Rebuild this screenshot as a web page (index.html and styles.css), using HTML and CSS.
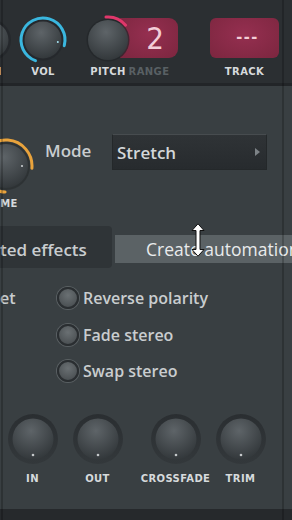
FILE: index.html
```html
<!doctype html>
<html lang="en">
    <head>
        <meta charset="UTF-8" />
        <meta name="viewport" content="width=device-width, initial-scale=1" />

        <link rel="stylesheet" href="styles.css">

        <title>Channel settings</title>
    </head>
    <body>
        <!-- shared gradients for the knobs -->
        <svg class="defs" aria-hidden="true">
            <defs>
                <radialGradient id="knob-fill" cx="0.45" cy="0.3" r="0.8">
                    <stop offset="0" stop-color="#5e6468" />
                    <stop offset="1" stop-color="#2d3235" />
                </radialGradient>
                <linearGradient id="knob-halo" x1="0" y1="0" x2="0" y2="1">
                    <stop offset="0" stop-color="#2a2e31" />
                    <stop offset="1" stop-color="#33383b" />
                </linearGradient>
            </defs>
        </svg>

        <div id="panel">
            <!-- Top strip: knobs and the red readouts -->
            <div class="top-bar">
                <div class="ctl ctl-cut">
                    <svg class="knob" width="48" height="48" viewBox="0 0 48 48">
                        <circle cx="24" cy="24" r="21" fill="#222528" opacity="0.6" />
                        <circle cx="24" cy="24" r="18.5" fill="url(#knob-fill)" />
                    </svg>
                    <span class="ctl-label">PAN</span>
                </div>
                <div class="ctl ctl-vol">
                    <svg class="knob" width="48" height="48" viewBox="0 0 48 48">
                        <circle cx="24" cy="24" r="20.5" fill="#222528" opacity="0.6" />
                        <circle cx="24" cy="24" r="18.5" fill="url(#knob-fill)" />
                        <path d="M16.48 44.68 A22 22 0 1 1 45.25 29.69" fill="none" stroke="#3ab7df" stroke-width="3" stroke-linecap="round" />
                        <circle cx="38.8" cy="26.1" r="1" fill="#a6e6f6" />
                    </svg>
                    <span class="ctl-label">VOL</span>
                </div>
                <div class="ctl ctl-pitch">
                    <svg class="knob" width="48" height="48" viewBox="0 0 48 48">
                        <circle cx="24" cy="24" r="21.5" fill="#222528" opacity="0.7" />
                        <circle cx="24" cy="24" r="20" fill="url(#knob-fill)" />
                        <path d="M22 1.09 A23 23 0 0 1 41.62 9.22" fill="none" stroke="#e0376b" stroke-width="3" stroke-linecap="round" />
                    </svg>
                    <span class="ctl-label">PITCH</span>
                </div>
                <div class="ctl ctl-range">
                    <div class="readout readout-range">2</div>
                    <span class="ctl-label dim">RANGE</span>
                </div>
                <div class="ctl ctl-track">
                    <div class="readout readout-track">---</div>
                    <span class="ctl-label">TRACK</span>
                </div>
            </div>

            <!-- Stretch mode -->
            <div class="mode-row">
                <div class="ctl ctl-volume">
                    <svg class="knob" width="60" height="60" viewBox="0 0 60 60">
                        <circle cx="30" cy="30" r="24" fill="#26292c" opacity="0.6" />
                        <circle cx="30" cy="30" r="22" fill="url(#knob-fill)" />
                        <path d="M29.09 55.98 A26 26 0 1 1 55.9 32.27" fill="none" stroke="#e9a33c" stroke-width="3" stroke-linecap="round" />
                        <circle cx="46" cy="30" r="1.1" fill="#c9cdcf" />
                    </svg>
                    <span class="ctl-label ctl-label-me">ME</span>
                </div>
                <span class="mode-label">Mode</span>
                <div class="dropdown">
                    <span>Stretch</span>
                    <span class="dropdown-arrow"></span>
                </div>
            </div>

            <!-- Effects header, with the hover hint over it -->
            <div class="effects">
                <div class="effects-tab">ted effects</div>
                <div class="hint">Create automation</div>
                <svg class="cursor" width="14" height="34" viewBox="0 0 14 34">
                    <path d="M7 0.8 L13 7.5 L9 7.5 L9 26.5 L13 26.5 L7 33.2 L1 26.5 L5 26.5 L5 7.5 L1 7.5 Z" fill="#fff" stroke="#111" stroke-width="1" />
                </svg>
            </div>

            <div class="options">
                <div class="options-side">et</div>
                <div class="radio-list">
                    <div class="radio"><span class="radio-dot"></span>Reverse polarity</div>
                    <div class="radio"><span class="radio-dot"></span>Fade stereo</div>
                    <div class="radio"><span class="radio-dot"></span>Swap stereo</div>
                </div>
            </div>

            <div class="knob-row">
                <div class="bk">
                    <svg class="knob" width="52" height="52" viewBox="0 0 52 52">
                        <circle cx="26" cy="26" r="25" fill="url(#knob-halo)" />
                        <circle cx="26" cy="26" r="20.5" fill="url(#knob-fill)" />
                        <circle cx="26" cy="42" r="1.3" fill="#c4c8ca" />
                    </svg>
                    <span class="ctl-label">IN</span>
                </div>
                <div class="bk">
                    <svg class="knob" width="52" height="52" viewBox="0 0 52 52">
                        <circle cx="26" cy="26" r="25" fill="url(#knob-halo)" />
                        <circle cx="26" cy="26" r="20.5" fill="url(#knob-fill)" />
                        <circle cx="26" cy="42" r="1.3" fill="#c4c8ca" />
                    </svg>
                    <span class="ctl-label">OUT</span>
                </div>
                <div class="bk bk-gap">
                    <svg class="knob" width="52" height="52" viewBox="0 0 52 52">
                        <circle cx="26" cy="26" r="25" fill="url(#knob-halo)" />
                        <circle cx="26" cy="26" r="20.5" fill="url(#knob-fill)" />
                        <circle cx="26" cy="42" r="1.3" fill="#c4c8ca" />
                    </svg>
                    <span class="ctl-label">CROSSFADE</span>
                </div>
                <div class="bk">
                    <svg class="knob" width="52" height="52" viewBox="0 0 52 52">
                        <circle cx="26" cy="26" r="25" fill="url(#knob-halo)" />
                        <circle cx="26" cy="26" r="20.5" fill="url(#knob-fill)" />
                        <circle cx="26" cy="42" r="1.3" fill="#c4c8ca" />
                    </svg>
                    <span class="ctl-label">TRIM</span>
                </div>
            </div>

            <div class="footer"></div>
        </div>
    </body>
</html>
```

FILE: styles.css
```css
body,
html {
    padding: 0;
    margin: 0;
}
body {
    width: 292px;
    height: 520px;
    overflow: hidden;
    background-color: #393f42;
    font-family: "Open Sans", "DejaVu Sans", sans-serif;
    color: #c9cdcf;
}
.defs {
    position: absolute;
    width: 0;
    height: 0;
}
#panel {
    position: relative;
    height: 520px;
    display: flex;
    flex-direction: column;
    overflow: hidden;
}
/* thin dark frame lines at the edges */
#panel::before,
#panel::after {
    content: "";
    position: absolute;
    top: 0;
    bottom: 0;
    width: 2px;
    background: rgba(0, 0, 0, 0.2);
    z-index: 3;
}
#panel::before {
    left: 1px;
}
#panel::after {
    right: 8px;
}

/* -- TOP BAR -- */

.top-bar {
    display: flex;
    align-items: flex-start;
    flex-shrink: 0;
    height: 67px;
    padding-top: 16px;
    background-color: #2b2f32;
    border-bottom: 3px solid #222528;
}
.ctl {
    display: flex;
    flex-direction: column;
    align-items: center;
    flex-shrink: 0;
    width: 48px;
}
.knob {
    display: block;
    overflow: visible;
}
.ctl-label {
    margin-top: 2px;
    font: bold 10px/12px "DejaVu Sans", sans-serif;
    letter-spacing: 0.4px;
    color: #d6dadc;
    white-space: nowrap;
}
.ctl-label.dim {
    color: #596064;
}
.ctl-cut {
    margin-left: -34px;
}
.ctl-vol {
    margin-left: 5px;
}
.ctl-pitch {
    position: relative;
    z-index: 1;
    margin-left: 17px;
}
.ctl-range {
    width: 58px;
    margin-left: -12px;
}
.ctl-track {
    width: 69px;
    margin-left: 32px;
}
.readout {
    box-sizing: border-box;
    width: 100%;
    height: 40px;
    margin-top: 2px;
    margin-bottom: 6px;
    background: radial-gradient(ellipse at 50% 40%, #952f50, #7c263f);
    color: #f3cdd7;
    text-align: center;
}
.readout-range {
    padding-left: 12px;
    border-radius: 0 9px 9px 0;
    font: 31px/40px "Liberation Sans Narrow", "DejaVu Sans Condensed", sans-serif;
}
.readout-track {
    border-radius: 6px;
    padding-left: 6px;
    font: bold 18px/38px "Liberation Sans", sans-serif;
    letter-spacing: 1.5px;
}

/* -- MODE ROW -- */

.mode-row {
    display: flex;
    align-items: flex-start;
    flex-shrink: 0;
    margin-top: 48px;
}
.ctl-volume {
    width: 60px;
    margin-left: -24px;
    margin-top: 2px;
}
.ctl-label-me {
    margin-left: 6px;
}
.mode-label {
    margin-left: 9px;
    margin-top: 7px;
    font-size: 17px;
    font-weight: 600;
    line-height: 20px;
}
.dropdown {
    display: flex;
    align-items: center;
    justify-content: space-between;
    box-sizing: border-box;
    width: 155px;
    height: 36px;
    margin-left: auto;
    margin-right: 25px;
    padding: 0 6px 0 4px;
    background: linear-gradient(#2f3336, #272b2e);
    border: 1px solid #24282a;
    border-top-color: #474c4f;
    font-size: 17px;
    font-weight: 600;
    color: #d3d7d9;
}
.dropdown-arrow {
    width: 0;
    height: 0;
    border-left: 5px solid #7d8387;
    border-top: 4px solid transparent;
    border-bottom: 4px solid transparent;
}

/* -- EFFECTS -- */

.effects {
    position: relative;
    flex-shrink: 0;
    height: 42px;
    margin-top: 16px;
}
.effects-tab {
    box-sizing: border-box;
    width: 112px;
    height: 42px;
    padding-top: 14px;
    background-color: #2f3437;
    border-radius: 0 4px 4px 0;
    font-size: 17px;
    font-weight: 600;
    line-height: 20px;
    white-space: nowrap;
}
.hint {
    position: absolute;
    left: 115px;
    top: 9px;
    box-sizing: border-box;
    width: 200px;
    height: 28px;
    padding-left: 31px;
    background-color: #5b6265;
    color: #e9ebec;
    font-size: 17.5px;
    line-height: 28px;
    white-space: nowrap;
    overflow: hidden;
}
.cursor {
    position: absolute;
    left: 191px;
    top: -3px;
    z-index: 2;
}

.options {
    display: flex;
    flex-shrink: 0;
    margin-top: 12px;
}
.options-side {
    width: 57px;
    font-size: 16px;
    font-weight: 600;
    line-height: 36.5px;
}
.radio-list {
    display: flex;
    flex-direction: column;
}
.radio {
    display: flex;
    align-items: center;
    gap: 4px;
    height: 36.5px;
    font-size: 16px;
    font-weight: 600;
    white-space: nowrap;
}
.radio-dot {
    box-sizing: border-box;
    width: 22px;
    height: 22px;
    border-radius: 50%;
    border: 2px solid #2a2e31;
    box-shadow: 0 0 0 1px #5a6063;
    background: radial-gradient(circle at 50% 35%, #6a7073, #43484b);
}

/* -- BOTTOM KNOBS -- */

.knob-row {
    display: flex;
    flex-shrink: 0;
    margin-top: 23px;
}
.bk {
    display: flex;
    flex-direction: column;
    align-items: center;
    width: 65px;
}
.bk .ctl-label {
    margin-top: 8px;
}
.bk-gap {
    margin-left: 13px;
}
.footer {
    flex-shrink: 0;
    height: 11px;
    margin-top: auto;
    background-color: #26292c;
}
```
